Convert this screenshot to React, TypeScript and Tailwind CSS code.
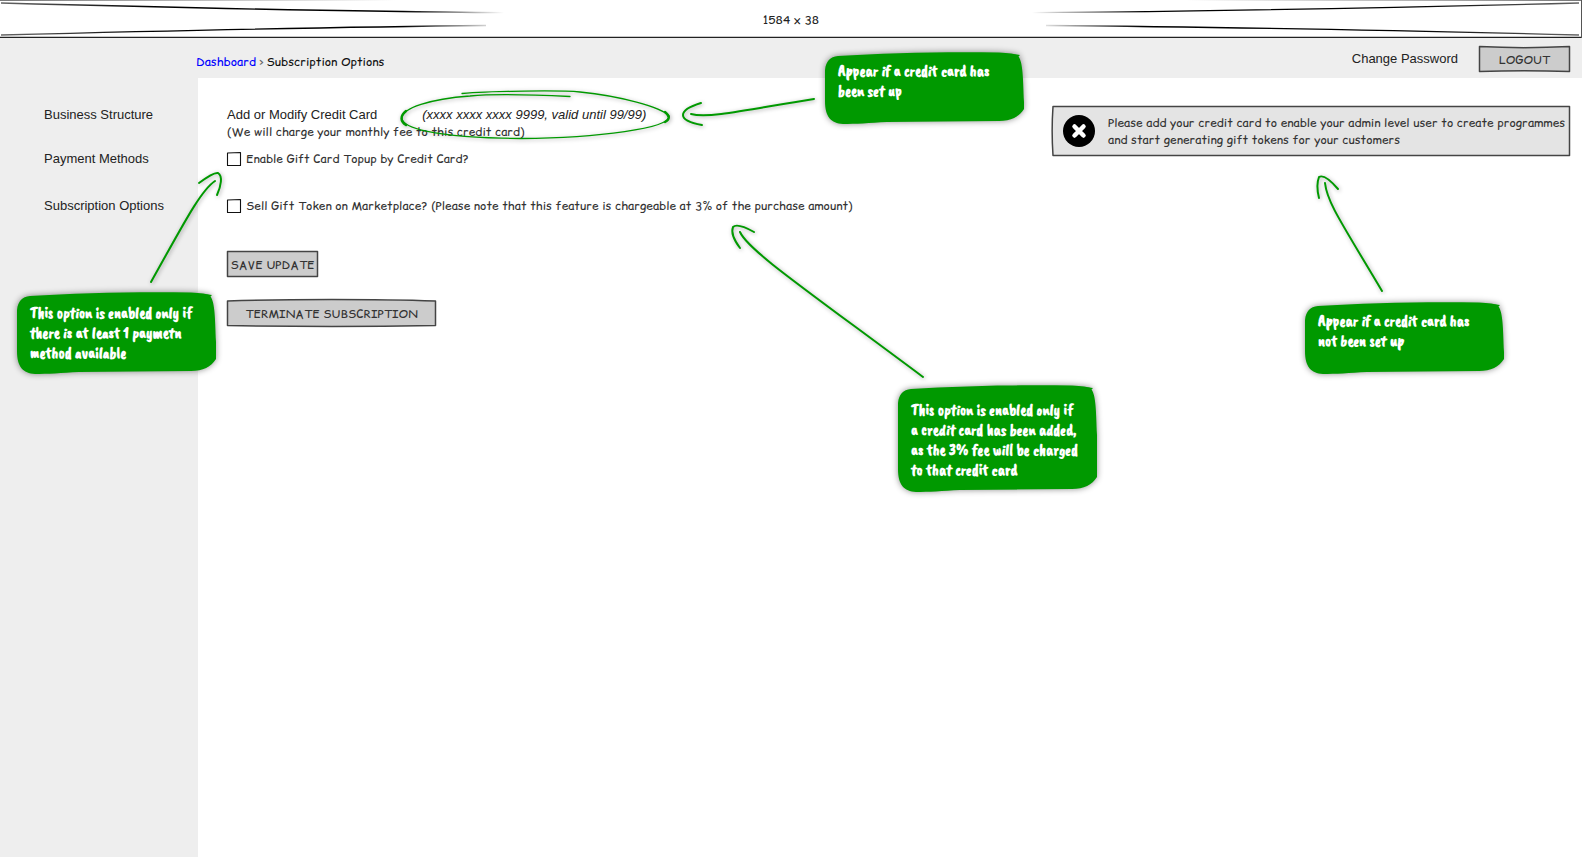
import type { ReactNode } from 'react';

const HAND = "font-['Comic_Sans_MS','Comic_Relief','Comic_Neue',Lato,sans-serif]";
const GREEN = '#009900';

function SketchFrame({ d, fill, w, h, thin }: { d: string; fill: string; w: number; h: number; thin?: boolean }) {
  return (
    <svg
      className="pointer-events-none absolute inset-0 h-full w-full overflow-visible"
      viewBox={`0 0 ${w} ${h}`}
      preserveAspectRatio="none"
      aria-hidden="true"
    >
      <path
        d={d}
        fill={fill}
        stroke={thin ? '#111111' : '#444444'}
        strokeWidth={thin ? 1.1 : 1.5}
        strokeLinejoin="round"
        vectorEffect="non-scaling-stroke"
      />
    </svg>
  );
}

function SketchButton({ children, className, d, w }: { children: ReactNode; className: string; d: string; w: number }) {
  return (
    <button type="button" className={`relative h-[26px] pt-[2px] text-[12px] leading-[18px] whitespace-nowrap text-[#333333] ${HAND} ${className}`}>
      <SketchFrame d={d} fill="#cccccc" w={w} h={26} />
      <span className="relative">{children}</span>
    </button>
  );
}

function CheckRow({ id, label }: { id: string; label: string }) {
  return (
    <div className="flex items-center gap-[5px]">
      <span className="relative h-[14px] w-[14px]">
        <SketchFrame thin d="M0.500 1 L13.500 0.5 L13.500 13.500 L0.5 13.500 Z" fill="#ffffff" w={14} h={14} />
        <input id={id} type="checkbox" className="relative block h-[14px] w-[14px] appearance-none" />
      </span>
      <label htmlFor={id} className={`text-[12px] leading-[18px] text-[#333333] ${HAND}`}>
        {label}
      </label>
    </div>
  );
}

function Callout({ lines, className, height }: { lines: string[]; className: string; height: number }) {
  const h = height;
  const d = `M0 18 C1 9 5 5 13 4 C60 1 120 -0.5 174 0.5 C184 1 190 2 195 3 L193.500 4.500 C198 11 198 25 199 50 L199 ${h - 15} C194 ${h - 7} 186 ${h - 3} 174 ${h - 3} L62 ${h - 2} C45 ${h - 1} 30 ${h} 18 ${h} C6 ${h - 1} 0 ${h - 7} 0 ${h - 23} Z`;
  return (
    <div className={`absolute w-[199px] px-[13px] ${className}`}>
      <svg
        className="absolute inset-0 h-full w-full overflow-visible drop-shadow-[0_0_3px_rgba(0,0,0,0.45)]"
        viewBox={`0 0 199 ${h}`}
        preserveAspectRatio="none"
        aria-hidden="true"
      >
        <path d={d} fill={GREEN} />
      </svg>
      <p className="relative font-['Caveat_Brush',Lato,sans-serif] text-[16px] leading-[20px] font-bold whitespace-nowrap text-white">
        {lines.map((line) => (
          <span key={line} className="block">
            {line}
          </span>
        ))}
      </p>
    </div>
  );
}

function SizeBanner() {
  return (
    <div className="relative flex h-[38px] items-center justify-center bg-white pt-[2px]">
      <svg className="absolute inset-0 h-full w-full" viewBox="0 0 1582 38" preserveAspectRatio="none" aria-hidden="true">
        <defs>
          <linearGradient id="fadeRight" gradientUnits="userSpaceOnUse" x1="0" y1="0" x2="504" y2="0">
            <stop offset="0" stopColor="#666" />
            <stop offset="0.3" stopColor="#000" />
            <stop offset="0.8" stopColor="#000" />
            <stop offset="1" stopColor="#000" stopOpacity="0" />
          </linearGradient>
          <linearGradient id="fadeLeft" gradientUnits="userSpaceOnUse" x1="1582" y1="0" x2="1032" y2="0">
            <stop offset="0" stopColor="#666" />
            <stop offset="0.3" stopColor="#000" />
            <stop offset="0.8" stopColor="#000" />
            <stop offset="1" stopColor="#000" stopOpacity="0" />
          </linearGradient>
          <linearGradient id="topEdge" gradientUnits="userSpaceOnUse" x1="0" y1="0" x2="1582" y2="0">
            <stop offset="0" stopColor="#777" />
            <stop offset="0.25" stopColor="#777" stopOpacity="0" />
            <stop offset="0.75" stopColor="#777" stopOpacity="0" />
            <stop offset="1" stopColor="#777" />
          </linearGradient>
        </defs>
        <rect x="0" y="0" width="1582" height="1" fill="url(#topEdge)" />
        <g fill="none" strokeWidth="1.3">
          <path d="M1 3 C150 7 300 11 504 12.700" stroke="url(#fadeRight)" />
          <path d="M1 35 C160 31 330 27 486 25.500" stroke="url(#fadeRight)" />
          <path d="M1579 3 C1420 7 1240 11 1032 12.700" stroke="url(#fadeLeft)" />
          <path d="M1579 35 C1420 31 1240 27 1046 25.500" stroke="url(#fadeLeft)" />
        </g>
        <path d="M0 37.500 H1582" stroke="#222" strokeWidth="1.400" />
        <path d="M1581.500 0 V38" stroke="#555" />
      </svg>
      <span className={`relative text-[12px] leading-[18px] ${HAND}`}>1584 x 38</span>
    </div>
  );
}

function Arrows() {
  return (
    <svg
      className="pointer-events-none absolute top-0 left-0 h-[857px] w-[1582px] drop-shadow-[1px_1px_2px_rgba(0,0,0,0.35)]"
      viewBox="0 0 1582 857"
      fill="none"
      stroke={GREEN}
      strokeWidth="2"
      strokeLinecap="round"
      aria-hidden="true"
    >
      <path strokeWidth="1.300" d="M462 93.500 C490 91 560 90 580 92 C620 96 661 107 669 116" />
      <path strokeWidth="1.300" d="M570 96.500 C540 95 500 93 470 96 C430 99 402 108 402 118 C402 127 430 138 521 138.500 C600 138 669 128 669 116.500" />
      <path strokeWidth="2.400" d="M406 111 C400 116 400 121 406 125" />
      <path strokeWidth="2.400" d="M665 112 C670 116 670 119 665 122" />
      <path d="M701 103 C691 106 683 110 683 115 C683 120 691 123 702 125" />
      <path d="M691 114 C710 119 755 108 814 99" />
      <path d="M199 183 C207 177 214 172 218 173 C223 176 221 186 217 195" />
      <path d="M215 181 C200 191 182 227 151 282" />
      <path d="M754 232 C745 227 736 224 733 227 C731 232 734 240 740 248" />
      <path d="M740 232 C748 250 801 286 923 377" />
      <path d="M1338 189 C1332 182 1324 174 1319 177 C1317 182 1317 190 1319 198" />
      <path d="M1325 183 C1327 202 1341 222 1382 291" />
    </svg>
  );
}

export default function App() {
  return (
    <div className="relative flex min-h-screen flex-col overflow-hidden bg-white font-['Liberation_Sans',Arial,sans-serif] text-[13px] leading-[18px] text-[#222222]">
      <SizeBanner />
      <header className="flex h-[40px] items-center justify-between bg-[#eeeeee] pt-px pr-[12px] pl-[196px]">
        <nav aria-label="Breadcrumb" className={`flex gap-[3px] pt-[6px] text-[12px] ${HAND}`}>
          <a href="#dashboard" className="text-[#0000ff]">
            Dashboard
          </a>
          <span className="text-[#666666]">&gt;</span>
          <span className="text-[#111111]">Subscription Options</span>
        </nav>
        <div className="flex items-center gap-[21px]">
          <a href="#password">Change Password</a>
          <SketchButton className="w-[91px]" w={91} d="M0.5 0.5 C30 2 60 2 90.5 0.5 L90.5 25.5 C60 24.5 30 24.5 0.5 25.5 Z">
            LOGOUT
          </SketchButton>
        </div>
      </header>
      <div className="flex flex-1">
        <aside className="flex w-[198px] flex-col bg-[#eeeeee] pt-[28px] pl-[44px]">
          <span>Business Structure</span>
          <span className="mt-[26px]">Payment Methods</span>
          <span className="mt-[29px]">Subscription Options</span>
        </aside>
        <main className="flex flex-1 items-start justify-between pt-[28px] pr-[12px] pl-[29px]">
          <form className="flex flex-col items-start">
            <div className="flex gap-[45px]">
              <span>Add or Modify Credit Card</span>
              <em>(xxxx xxxx xxxx 9999, valid until 99/99)</em>
            </div>
            <p className={`text-[12px] leading-[16px] text-[#333333] ${HAND}`}>(We will charge your monthly fee to this credit card)</p>
            <div className="mt-[10px]">
              <CheckRow id="topup" label="Enable Gift Card Topup by Credit Card?" />
            </div>
            <div className="mt-[29px]">
              <CheckRow
                id="sell"
                label="Sell Gift Token on Marketplace? (Please note that this feature is chargeable at 3% of the purchase amount)"
              />
            </div>
            <SketchButton className="mt-[36px] w-[91px]" w={91} d="M0.5 0.5 H90.5 V25.5 H0.5 Z">
              SAVE UPDATE
            </SketchButton>
            <SketchButton className="mt-[23px] w-[209px]" w={209} d="M0.5 1 C60 -1 150 -1 208.5 1 V25.5 C150 26.5 60 26.5 0.5 25.5 Z">
              TERMINATE SUBSCRIPTION
            </SketchButton>
          </form>
          <div role="alert" className="relative flex h-[50px] w-[518px] items-center pl-[11px]">
            <SketchFrame w={518} h={50} fill="#e4e4e4" d="M1 0.500 H517.500 V49.500 H1 C0 35 0 15 1 0.500 Z" />
            <svg className="relative h-[32px] w-[32px] shrink-0" viewBox="0 0 32 32" aria-hidden="true">
              <circle cx="16" cy="16" r="16" fill="#000" />
              <path d="M11.500 11.500 L20.500 20.500 M20.500 11.500 L11.500 20.500" stroke="#fff" strokeWidth="4.500" strokeLinecap="round" />
            </svg>
            <p className={`relative ml-[13px] text-[12px] leading-[17px] whitespace-nowrap text-[#333333] ${HAND}`}>
              Please add your credit card to enable your admin level user to create programmes
              <br />
              and start generating gift tokens for your customers
            </p>
          </div>
        </main>
      </div>
      <Arrows />
      <Callout className="top-[52px] left-[825px] h-[72px] pt-[9px]" height={72} lines={['Appear if a credit card has', 'been set up']} />
      <Callout
        className="top-[292px] left-[17px] h-[82px] pt-[11px]"
        height={82}
        lines={['This option is enabled only if', 'there is at least 1 paymetn', 'method available']}
      />
      <Callout
        className="top-[385px] left-[898px] h-[107px] pt-[15px]"
        height={107}
        lines={['This option is enabled only if', 'a credit card has been added,', 'as the 3% fee will be charged', 'to that credit card']}
      />
      <Callout className="top-[302px] left-[1305px] h-[72px] pt-[9px]" height={72} lines={['Appear if a credit card has', 'not been set up']} />
    </div>
  );
}
